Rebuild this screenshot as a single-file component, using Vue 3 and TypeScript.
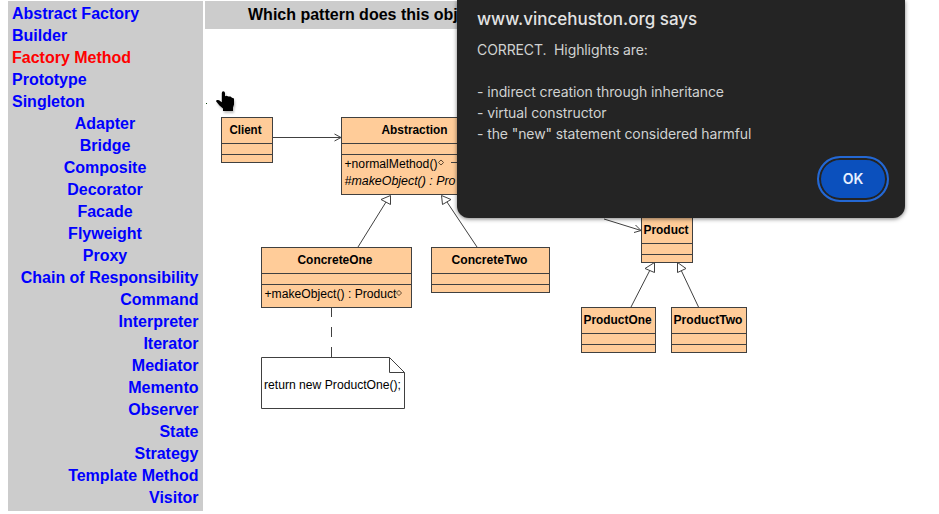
<script setup lang="ts">
interface Pattern {
  name: string
  group: 'creational' | 'structural' | 'behavioral'
}

interface Label {
  text: string
  x: number
  y: number
  width: number
  kind: 'title' | 'member' | 'abstract'
}

interface ClassBox {
  x: number
  y: number
  width: number
  height: number
}

const groups: Record<Pattern['group'], string[]> = {
  creational: ['Abstract Factory', 'Builder', 'Factory Method', 'Prototype', 'Singleton'],
  structural: ['Adapter', 'Bridge', 'Composite', 'Decorator', 'Facade', 'Flyweight', 'Proxy'],
  behavioral: [
    'Chain of Responsibility', 'Command', 'Interpreter', 'Iterator', 'Mediator', 'Memento',
    'Observer', 'State', 'Strategy', 'Template Method', 'Visitor',
  ],
}

const patterns: Pattern[] = (Object.keys(groups) as Pattern['group'][]).flatMap((group) =>
  groups[group].map((name) => ({ name, group })),
)

const selected = 'Factory Method'

const boxes: ClassBox[] = [
  { x: 221.5, y: 117.5, width: 51, height: 45 },
  { x: 341.5, y: 117.5, width: 147, height: 77 },
  { x: 261.5, y: 247.5, width: 150, height: 60 },
  { x: 431.5, y: 247.5, width: 118, height: 45 },
  { x: 641.5, y: 217.5, width: 51, height: 45 },
  { x: 581.5, y: 307.5, width: 74, height: 45 },
  { x: 671.5, y: 307.5, width: 75, height: 45 },
]

const labels: Label[] = [
  { text: 'Client', x: 229.5, y: 134, width: 32, kind: 'title' },
  { text: 'Abstraction', x: 381.5, y: 134, width: 66, kind: 'title' },
  { text: 'ConcreteOne', x: 297.5, y: 264, width: 75, kind: 'title' },
  { text: 'ConcreteTwo', x: 451.5, y: 264, width: 76, kind: 'title' },
  { text: 'Product', x: 643.5, y: 234, width: 45, kind: 'title' },
  { text: 'ProductOne', x: 583.5, y: 324, width: 68, kind: 'title' },
  { text: 'ProductTwo', x: 673.5, y: 324, width: 69, kind: 'title' },
  { text: '+normalMethod()', x: 344.5, y: 168, width: 93, kind: 'member' },
  { text: '#makeObject() : Pro', x: 344.5, y: 185, width: 111, kind: 'abstract' },
  { text: '+makeObject() : Product', x: 264.5, y: 298, width: 132, kind: 'member' },
  { text: 'return new ProductOne();', x: 264, y: 389, width: 137, kind: 'member' },
]

const highlights = [
  'indirect creation through inheritance',
  'virtual constructor',
  'the "new" statement considered harmful',
]
</script>

<template>
  <div class="page">
    <nav class="sidebar">
      <a
        v-for="p in patterns"
        :key="p.name"
        :class="['pattern', p.group, { selected: p.name === selected }]"
      >{{ p.name }}</a>
    </nav>
    <main class="content">
      <h1 class="question">Which pattern does this obj</h1>
    </main>

    <svg class="diagram" width="939" height="514" viewBox="0 0 939 514">
      <g class="edges">
        <path d="M273 137.5H341M334.5 134L341 137.5L334.5 141" />
        <path d="M358 247L386 202" />
        <path d="M390.5 195.5L381 199.5L390.5 204.5Z" class="head" />
        <path d="M477 247L447 202" />
        <path d="M441.5 195.5L451 199.5L442.5 204.5Z" class="head" />
        <path d="M604 219L641 230.5M635.5 225L641 230.5L634 232.5" />
        <path d="M631 307L650 270" />
        <path d="M654.5 262.5L645 268.5L654.5 272.5Z" class="head" />
        <path d="M698.5 307L681 270" />
        <path d="M677.5 262.5L686 268.5L677.5 272.5Z" class="head" />
        <path d="M331.5 308V317M331.5 327V337M331.5 347V357" />
      </g>
      <g v-for="b in boxes" :key="`${b.x}-${b.y}`" class="box">
        <rect :x="b.x" :y="b.y" :width="b.width" :height="b.height" />
        <path :d="`M${b.x} ${b.y + 26}h${b.width}M${b.x} ${b.y + 37}h${b.width}`" />
      </g>
      <g class="edges">
        <path d="M261.5 357.5H389.5L404.5 372.5V408.5H261.5Z" class="head" />
        <path d="M389.5 357.5V372.5H404.5" />
        <path d="M451 162.5H457" />
        <path d="M441 160l2.6 2.5l-2.6 2.5l-2.6 -2.5z" class="mark" />
        <path d="M399 290.5l2.6 2.5l-2.6 2.5l-2.6 -2.5z" class="mark" />
      </g>
      <text
        v-for="l in labels"
        :key="l.text"
        :class="l.kind"
        :x="l.x"
        :y="l.y"
        :textLength="l.width"
        lengthAdjust="spacingAndGlyphs"
      >{{ l.text }}</text>
      <rect x="206" y="103" width="1" height="1" fill="#084008" />
      <path
        class="cursor"
        d="M221.8 93Q221.8 91.2 223.3 91.2T225 93V96.2L226.5 95.8L228.5 96.6L230.5 96.6L232 97.8L234 98.6V104.5L233 107.5V111H223V108.6L219.5 105.6L216.2 101.6Q215.8 100.2 217.4 100Q219 99.8 220.4 101.2L221.8 102.2Z"
      />
    </svg>

    <section class="dialog" role="dialog">
      <h2 class="dialog-title">www.vincehuston.org says</h2>
      <div class="message">
        <p>CORRECT.&nbsp; Highlights are:</p>
        <p class="blank"></p>
        <p v-for="h in highlights" :key="h">- {{ h }}</p>
      </div>
      <button class="ok" type="button">OK</button>
    </section>
  </div>
</template>

<style>
body {
  margin: 0;
  background: #fff;
  overflow: hidden;
}
</style>

<style scoped>
.page {
  position: relative;
  display: flex;
  gap: 2px;
  box-sizing: border-box;
  width: 939px;
  height: 514px;
  padding: 1px 39px 3px 8px;
  overflow: hidden;
  font-family: "Liberation Sans", Arial, sans-serif;
}

.sidebar {
  display: flex;
  flex-direction: column;
  box-sizing: border-box;
  width: 195px;
  height: 510px;
  padding: 2px 4px;
  background: #ccc;
}

.pattern {
  height: 22px;
  font-size: 16px;
  font-weight: bold;
  line-height: 21px;
  color: #00f;
  white-space: nowrap;
}

.structural {
  padding-right: 1px;
  text-align: center;
}

.behavioral {
  padding-right: 0.5px;
  text-align: right;
}

.selected {
  color: #f00;
}

.content {
  flex: 1;
}

.question {
  box-sizing: border-box;
  height: 28px;
  margin: 0;
  padding-left: 43px;
  background: #ccc;
  font-size: 16px;
  line-height: 27px;
  color: #000;
}

.diagram {
  position: absolute;
  top: 0;
  left: 0;
}

.edges path {
  fill: none;
  stroke: #404040;
  stroke-width: 1;
}

.edges .head {
  fill: #fff;
}

.edges .mark {
  stroke: #604830;
}

.box rect {
  fill: #fc9;
}

.box rect,
.box path {
  stroke: #404040;
  stroke-width: 1;
}

.title,
.member,
.abstract {
  font-size: 12px;
  fill: #000;
}

.title {
  font-weight: bold;
}

.abstract {
  font-style: italic;
}

.cursor {
  fill: #000;
  filter: drop-shadow(1px 2px 1px rgba(0, 0, 0, 0.25));
}

.dialog {
  position: absolute;
  top: 0;
  left: 457px;
  display: flex;
  flex-direction: column;
  box-sizing: border-box;
  width: 448px;
  height: 218px;
  padding: 8px 16px 16px 20px;
  border-radius: 0 0 12px 12px;
  background: #242424;
  box-shadow: 0 1px 4px rgba(0, 0, 0, 0.5);
  font-family: Inter, sans-serif;
  color: #e3e3e3;
}

.dialog-title {
  margin: 0 0 9px;
  font-size: 17px;
  font-weight: 500;
  line-height: 22px;
}

.message {
  font-size: 14px;
  line-height: 21px;
  letter-spacing: -0.1px;
  color: #d0d2d1;
}

.message p {
  height: 21px;
  margin: 0;
  white-space: nowrap;
}

.ok {
  align-self: flex-end;
  box-sizing: border-box;
  width: 72px;
  height: 46px;
  margin-top: auto;
  padding: 0 0 1px;
  border: 2px solid #2468d4;
  border-radius: 23px;
  background: #0b50bd;
  box-shadow: inset 0 0 0 2px #242424;
  font-family: Inter, sans-serif;
  font-size: 14px;
  font-weight: 600;
  color: #e8f0ff;
}
</style>
